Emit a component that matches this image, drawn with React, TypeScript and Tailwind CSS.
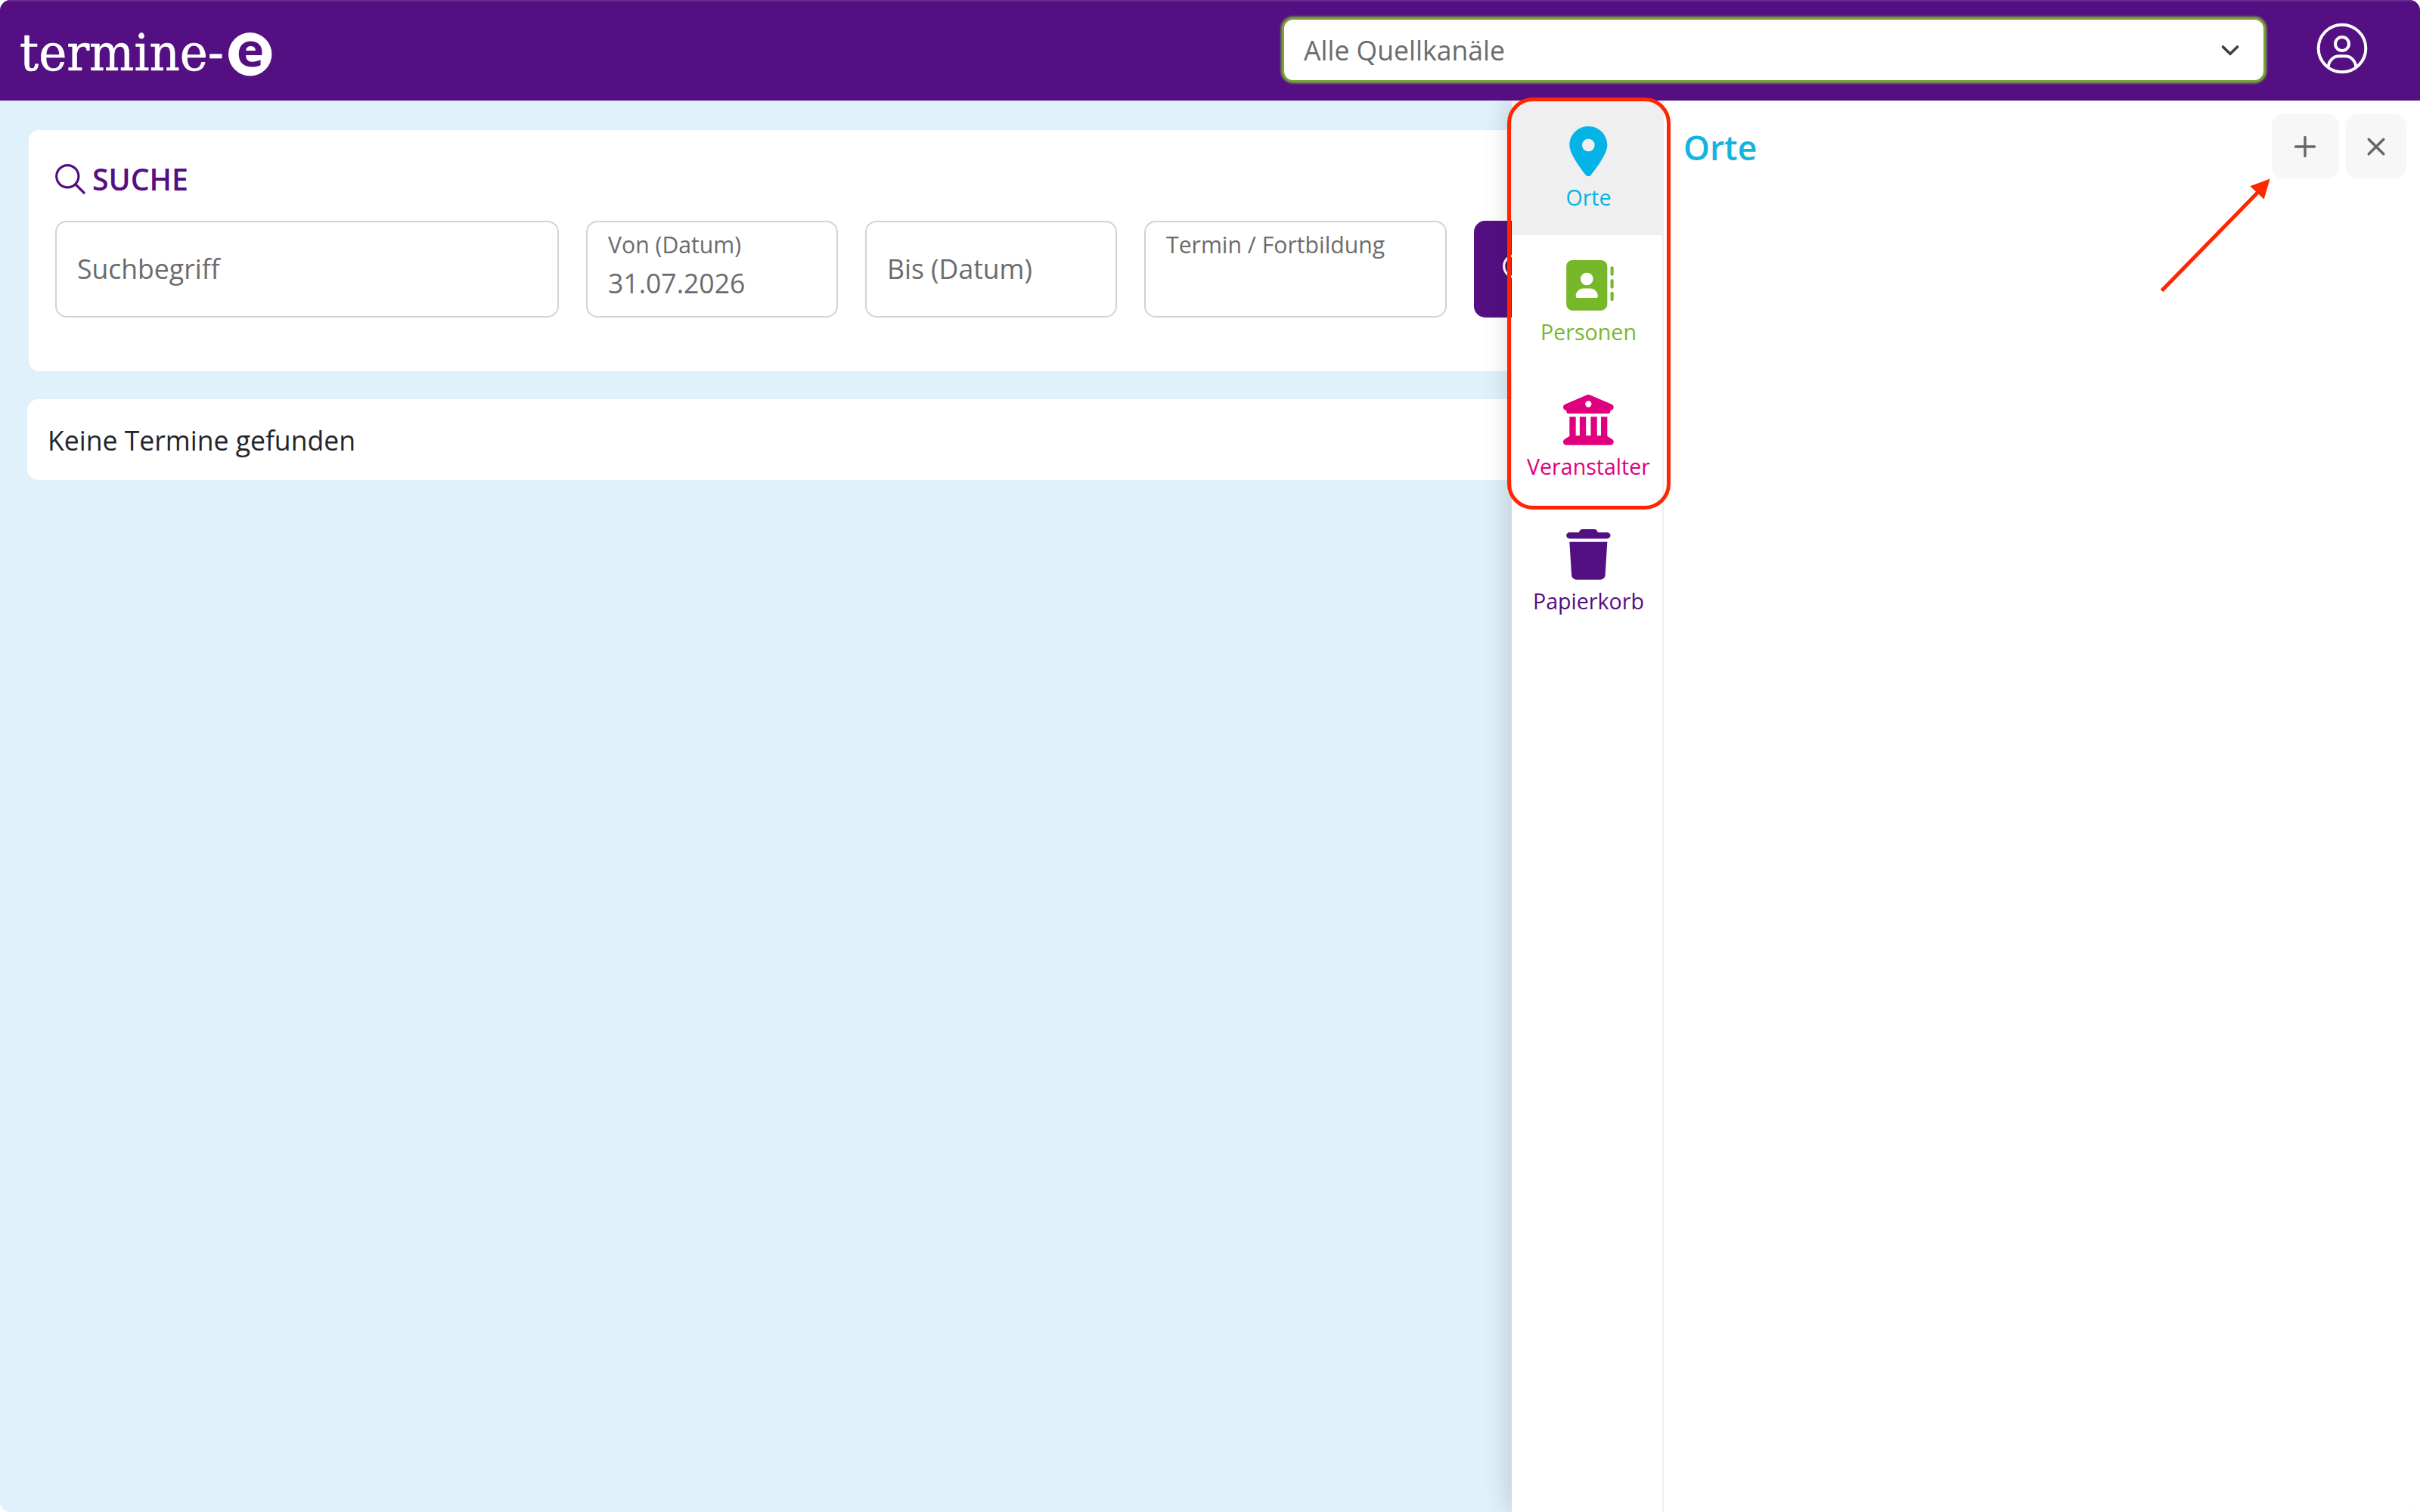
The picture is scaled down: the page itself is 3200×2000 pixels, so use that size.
import { FaAddressBook, FaBuildingColumns, FaLocationDot, FaTrash } from "react-icons/fa6";

const tabs = [
  { label: "Orte", Icon: FaLocationDot, color: "text-[#04b4e6]", bg: "bg-[#efefef]" },
  { label: "Personen", Icon: FaAddressBook, color: "text-[#76b82a]", bg: "bg-white" },
  { label: "Veranstalter", Icon: FaBuildingColumns, color: "text-[#e0007f]", bg: "bg-white" },
  { label: "Papierkorb", Icon: FaTrash, color: "text-[#540f82]", bg: "bg-white" },
];

const fields = [
  { label: "Suchbegriff", width: "w-[666px]" },
  { label: "Von (Datum)", value: "31.07.2026", width: "w-[333px]" },
  { label: "Bis (Datum)", width: "w-[333px]" },
  { label: "Termin / Fortbildung", value: " ", width: "w-[400px]" },
];

function SearchIcon() {
  return (
    <svg className="h-10 w-10 shrink-0" viewBox="0 0 40 40" fill="none" stroke="currentColor" strokeWidth="3.2" strokeLinecap="round">
      <circle cx="16.3" cy="16.3" r="14.6" />
      <path d="M27 27 38 38" />
    </svg>
  );
}

function Logo() {
  return (
    <svg className="h-[133px] w-[380px]" viewBox="0 0 380 133">
      <text x="26" y="92.5" fontSize="67" textLength="270" lengthAdjust="spacingAndGlyphs" fill="#fff" stroke="#fff" strokeWidth="0.6" className="font-['DejaVu_Serif',serif]">
        termine-
      </text>
      <circle cx="330.7" cy="71.7" r="28.7" fill="#fff" />
      <text x="331" y="88" fontSize="61" fontWeight="700" textAnchor="middle" fill="#540f82">
        e
      </text>
    </svg>
  );
}

function Header() {
  return (
    <header className="flex h-[133px] shrink-0 items-start border-t-2 border-[#672b90] bg-[#540f82]">
      <div className="-mt-0.5 flex-1">
        <Logo />
      </div>
      <div className="mt-[21px] flex h-[86px] w-[1301px] items-center justify-between rounded-[15px] border-[3px] border-[#75a534] bg-white pr-[32px] pl-[26px] shadow-[0_0_2px_2px_#6d685f]">
        <span className="mt-px text-[35.56px] leading-[53px] text-[#6c6c6c]">Alle Quellkanäle</span>
        <svg className="mt-[2px] h-4 w-6" viewBox="0 0 24 16" fill="none" stroke="#3f3f3f" strokeWidth="3.6" strokeLinecap="round" strokeLinejoin="round">
          <path d="M2.500 3 12 12.300 21.500 3" />
        </svg>
      </div>
      <svg className="mt-[28px] mr-[69px] ml-[67px] h-[68px] w-[68px]" viewBox="0 0 68 68" fill="none" stroke="#fff" strokeWidth="4">
        <circle cx="34" cy="34" r="31.300" />
        <circle cx="34" cy="28" r="9" />
        <path d="M15.500 59C16.500 49.500 23 44.300 30 44.300H38C45 44.300 51.500 49.500 52.500 59" />
      </svg>
    </header>
  );
}

function Field({ label, value, width }: { label: string; value?: string; width: string }) {
  return (
    <div className={`${width} flex h-32 shrink-0 flex-col rounded-[15px] border-2 border-[#d3d3d3] bg-white px-[27px] text-[#6c6c6c]`}>
      {value ? (
        <>
          <span className="mt-[7px] text-[30.2px] leading-[45px]">{label}</span>
          <span className="mt-[2px] text-[35.56px] leading-[53px]">{value}</span>
        </>
      ) : (
        <span className="mt-[35px] text-[35.56px] leading-[53px]">{label}</span>
      )}
    </div>
  );
}

function Main() {
  return (
    <main className="w-[1999px] shrink-0 overflow-hidden">
      <section className="mt-[38px] ml-[37px] h-[321px] rounded-l-[15px] border border-r-0 border-[#e9eff1] bg-white pt-[41px] pl-[35px]">
        <h2 className="flex items-center gap-[9px] text-[39.200px] leading-[48px] font-semibold text-[#540f82]">
          <SearchIcon />
          SUCHE
        </h2>
        <div className="mt-[30.500px] flex gap-[36px]">
          {fields.map((f) => (
            <Field key={f.label} {...f} />
          ))}
          <button className="flex h-32 w-[110px] shrink-0 items-center rounded-[15px] bg-[#540f82] pl-[38px] text-white">
            <SearchIcon />
          </button>
        </div>
      </section>
      <section className="mt-[36px] ml-[36px] flex h-[107px] items-center rounded-l-[15px] bg-white pt-px pl-[27px]">
        <p className="text-[35.56px] leading-[53px] text-[#212529]">Keine Termine gefunden</p>
      </section>
    </main>
  );
}

function SidePanel() {
  return (
    <aside className="flex flex-1 bg-white shadow-[0_0_36px_rgba(0,0,0,0.2)] [clip-path:inset(0_0_0_-60px)]">
      <nav className="w-[201px] border-r-2 border-[#eeeeee]">
        {tabs.map(({ label, Icon, color, bg }) => (
          <a key={label} href="#" className={`${bg} ${color} flex h-[177.8px] flex-col items-center pt-[33.5px] pl-[4px]`}>
            <Icon className="h-[66.7px] w-[66.7px]" />
            <span className="mt-[6px] text-[28.600px] leading-[43px]">{label}</span>
          </a>
        ))}
      </nav>
      <div className="flex flex-1 items-start pt-[18px] pr-[18px] pl-[26px]">
        <h1 className="mt-[13px] flex-1 text-[44.4px] leading-[63px] font-semibold text-[#14b3e0]">Orte</h1>
        <button className="flex h-[85px] w-[89px] items-center justify-center rounded-[15px] bg-[#f7f7f7] pr-[2px]">
          <svg className="h-[30px] w-[30px]" viewBox="0 0 30 30" stroke="#666" strokeWidth="3.400" strokeLinecap="round">
            <path d="M15 2.500V27.500M2.500 15H27.500" />
          </svg>
        </button>
        <button className="ml-[9px] flex h-[85px] w-[80px] items-center justify-center rounded-[15px] bg-[#f7f7f7]">
          <svg className="h-[30px] w-[30px]" viewBox="0 0 30 30" stroke="#666" strokeWidth="3.400" strokeLinecap="round">
            <path d="M5.200 5.200 24.800 24.800M24.800 5.200 5.200 24.800" />
          </svg>
        </button>
      </div>
    </aside>
  );
}

// Red marker around the tabs and the arrow to the plus button
function Annotations() {
  return (
    <>
      <div className="absolute top-[129px] left-[1993px] h-[545px] w-[216px] rounded-[34px] border-[5px] border-[#ff2600]" />
      <svg className="absolute top-[230px] left-[2850px] h-[160px] w-[160px]" viewBox="0 0 160 160">
        <path d="M8.500 154.500 136 24" stroke="#ff2600" strokeWidth="5" />
        <path d="M151.700 6.500 125.300 16.300 143.700 33.500Z" fill="#ff2600" />
      </svg>
    </>
  );
}

export default function App() {
  return (
    <div className="h-[2000px] w-[3200px] bg-white font-['Open_Sans',sans-serif]">
      <div className="relative flex h-full flex-col overflow-hidden rounded-[14px] bg-[#dff1fb]">
        <Header />
        <div className="flex min-h-0 flex-1">
          <Main />
          <SidePanel />
        </div>
        <Annotations />
      </div>
    </div>
  );
}
